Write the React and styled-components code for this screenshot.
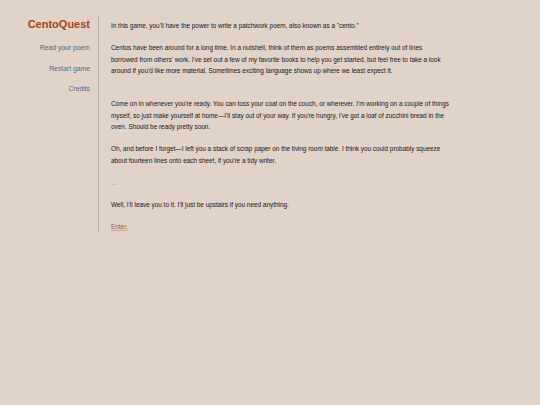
import React from "react";
import styled, { createGlobalStyle } from "styled-components";

const Global = createGlobalStyle`
  html, body { margin: 0; padding: 0; background: #e2d3c9; }
  body { font-family: "Liberation Sans", Arial, sans-serif; }
`;

const Page = styled.div`
  display: flex;
  align-items: flex-start;
  padding-top: 16px;
`;

const Layout = styled.div`
  display: flex;
  align-items: stretch;
`;

const Sidebar = styled.nav`
  width: 90px;
  padding-right: 8px;
  border-right: 1px solid #b9aba3;
  display: flex;
  flex-direction: column;
  align-items: flex-end;
`;

const Title = styled.h1`
  margin: 1px 0 12px;
  font-size: 11px;
  line-height: 14px;
  font-weight: bold;
  color: #a2421c;
`;

const NavLink = styled.a`
  font-size: 6.8px;
  line-height: 10px;
  color: #56677a;
  text-decoration: none;
  margin-bottom: 10.6px;
`;

const Content = styled.main`
  padding: 4.25px 0 0 12px;
  width: 339px;
  font-size: 6.4px;
  line-height: 11.5px;
`;

const P = styled.p`
  margin: 0 0 ${(p) => p.$gap || 10.5}px;
  font-size: 6.4px;
  line-height: 11.5px;
  color: ${(p) => (p.$muted ? "#9a8f8a" : "#151515")};
  &:last-child { margin-bottom: 0; }
`;

const Enter = styled.a`
  color: #a9502f;
  text-decoration: underline;
  text-decoration-color: rgba(169, 80, 47, 0.35);
`;

export default function App() {
  return (
    <>
      <Global />
      <Page>
        <Layout>
          <Sidebar>
            <Title>CentoQuest</Title>
            <NavLink href="#">Read your poem</NavLink>
            <NavLink href="#">Restart game</NavLink>
            <NavLink href="#">Credits</NavLink>
          </Sidebar>
          <Content>
            <P>In this game, you'll have the power to write a patchwork poem, also known as a "cento."</P>
            <P $gap={21.5}>Centos have been around for a long time. In a nutshell, think of them as poems assembled entirely out of lines borrowed from others' work. I've set out a few of my favorite books to help you get started, but feel free to take a look around if you'd like more material. Sometimes exciting language shows up where we least expect it.</P>
            <P>Come on in whenever you're ready. You can toss your coat on the couch, or wherever. I'm working on a couple of things myself, so just make yourself at home—I'll stay out of your way. If you're hungry, I've got a loaf of zucchini bread in the oven. Should be ready pretty soon.</P>
            <P>Oh, and before I forget—I left you a stack of scrap paper on the living room table. I think you could probably squeeze about fourteen lines onto each sheet, if you're a tidy writer.</P>
            <P $muted>...</P>
            <P>Well, I'll leave you to it. I'll just be upstairs if you need anything.</P>
            <P><Enter href="#">Enter.</Enter></P>
          </Content>
        </Layout>
      </Page>
    </>
  );
}
